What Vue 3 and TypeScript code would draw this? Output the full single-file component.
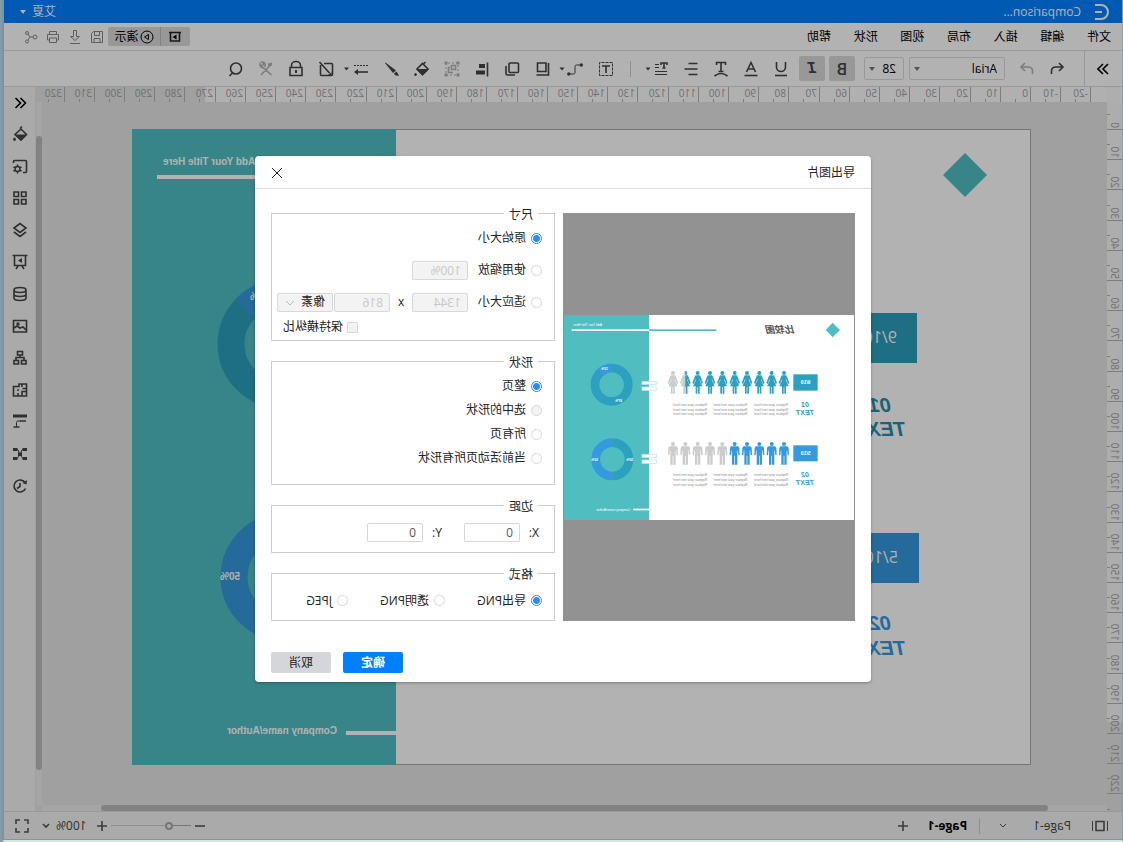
<script setup lang="ts">
import { ref } from 'vue'

type Shape = { d: string; f?: boolean; w?: number; c?: string; dash?: string }
type Icon = { label: string; w?: number; off?: boolean; shapes: Shape[] }

const menus = ['文件', '编辑', '插入', '布局', '视图', '形状', '帮助']

const textTools: Icon[] = [
  { label: '下划线', shapes: [{ d: 'M10.5 5v5a4.5 4.5 0 0 0 9 0V5', w: 2 }, { d: 'M9 18.5h12', w: 2 }] },
  { label: '字体颜色', shapes: [{ d: 'M10.5 15L15 5.5L19.5 15M12 12h6', w: 2 }, { d: 'M8.5 18.5h13', w: 2 }] },
  { label: '文字效果', shapes: [{ d: 'M10.5 8V5.5h9V8M15 5.5v9M12.5 14.5h5', w: 2 }, { d: 'M8.5 19q6.500-5 13 0', w: 2 }] },
  { label: '行距', shapes: [{ d: 'M8.5 6.500h9M8.500 12h13M8.500 17.500h9', w: 2 }] },
  { label: '段落', shapes: [{ d: 'M9 8V6h6v2M12 6v5M10.500 11h3', w: 2 }, { d: 'M17 7.500h4M17 10.500h4M9 14.500h12M9 17.500h12', w: 1 }, { d: 'M25.500 10.500h5l-2.500 3z', f: true }] }
]

const shapeTools: Icon[] = [
  { label: '文本框', shapes: [{ d: 'M8.5 5.5h13v13h-13z', dash: '3 1', w: 1 }, { d: 'M11 9h8M15 9v7', w: 2 }] },
  { label: '连接线', w: 34, shapes: [{ d: 'M10 8h4.500q1.500 0 1.500 1.500v6q0 1.500 1.500 1.500H22', w: 1 }, { d: 'M8 8a1.700 1.700 0 1 0 3.400 0a1.700 1.700 0 1 0-3.400 0M20.500 17a1.700 1.700 0 1 0 3.400 0a1.700 1.700 0 1 0-3.400 0M26.500 10.500h5l-2.500 3z', f: true }] },
  { label: '阴影', shapes: [{ d: 'M11 6h8.500v8.500H11z', w: 2 }, { d: 'M8.500 6v12h12', w: 2 }] },
  { label: '层叠', shapes: [{ d: 'M9.500 6h7.500q1 0 1 1v7.500q0 1-1 1H9.500q-1 0-1-1V7q0-1 1-1z', w: 2 }, { d: 'M21 9v7.500q0 1.500-1.500 1.500H12', w: 2 }] },
  { label: '对齐', shapes: [{ d: 'M9.500 5.500v14', w: 2 }, { d: 'M12 7h6v4h-6zM12 13.500h9v4h-9z', f: true }] },
  { label: '组合', off: true, shapes: [{ d: 'M9 6h12v12H9z', dash: '2 2', w: 1 }, { d: 'M7.500 4.500h3v3h-3zM19.500 4.500h3v3h-3zM7.500 16.500h3v3h-3zM19.500 16.500h3v3h-3z', f: true }, { d: 'M11.500 8.500h4v4h-4zM14 15.500h4.500v-5H17', w: 2 }] },
  { label: '填充', shapes: [{ d: 'M9 12L14.500 6.500L20 12L14.500 17.500z', w: 2 }, { d: 'M8 12h13l-6.500 6.500zM20 17.500q1.500-3 3 0q-1.500 3-3 0z', f: true }, { d: 'M11.500 5l2.500 2.500', w: 2 }] },
  { label: '画笔', shapes: [{ d: 'M21.500 5.500l.5.500-8 10-3-2.500zM10.500 14.500l2.500 2q-1 3-5 2z', f: true }] },
  { label: '线型', w: 36, shapes: [{ d: 'M9 8.500h14', dash: '2 1', w: 1 }, { d: 'M9 15h12', w: 2 }, { d: 'M19 12l4 3-4 3zM28 10.500h5l-2.500 3z', f: true }] },
  { label: '编辑形状', shapes: [{ d: 'M17 6.500h-7.500q-1 0-1 1v10q0 1 1 1h10q1 0 1-1V8M21.500 5l-10 11', w: 2 }, { d: 'M9.500 15l4 3.500h-4z', f: true }] },
  { label: '锁定', shapes: [{ d: 'M10.500 10V8.500a4.500 4 0 0 1 9 0V10M9 10.500h12v8H9z', w: 2 }, { d: 'M14 13h2v3h-2z', f: true }] },
  { label: '工具', off: true, shapes: [{ d: 'M9.500 18l8-7M20 18L10.500 8M17 11q4 0 4-4l-2 2-2-2 2-2q-4 0-3 5', w: 2 }, { d: 'M9 5.500l4 1v3l-4-1z', f: true }] },
  { label: '查找', shapes: [{ d: 'M9.500 11.500a5.500 5.500 0 1 0 11 0a5.500 5.500 0 1 0-11 0M18.500 16l3 3', w: 2 }] }
]

const fileTools: Icon[] = [
  { label: '保存', shapes: [{ d: 'M5.500 6.500h9l2 2v9h-11zM8.500 6.500v4h5v-4M8 17.500v-4h6v4' }] },
  { label: '下载', shapes: [{ d: 'M9.500 5.500h3v6h3l-4.500 4-4.500-4h3zM6 18.500h10' }] },
  { label: '打印', shapes: [{ d: 'M7.500 9V6.500h7V9M7.500 15h-2V9.500h11V15h-2M7.500 13h7v4.500h-7z' }] },
  { label: '分享', shapes: [{ d: 'M5 12a2 2 0 1 0 4 0a2 2 0 1 0-4 0M13.500 8a1.500 1.500 0 1 0 3 0a1.500 1.500 0 1 0-3 0M13.500 16.500a1.500 1.500 0 1 0 3 0a1.500 1.500 0 1 0-3 0M9 12h3l2-3M12 12l2 3' }] }
]

const sideTools: Icon[] = [
  { label: '收起', shapes: [{ d: 'M14.500 7l-5 5 5 5M19.500 7l-5 5 5 5', w: 2, c: '#000' }] },
  { label: '填充样式', shapes: [{ d: 'M13 4.500l2 2M8.500 12.500L14 7l6 5.500-6 5.500z', w: 2 }, { d: 'M8 12.500h12.500L14 19zM19 17q1.500-3 3 0q0 2-1.500 2t-1.500-2z', f: true }] },
  { label: '页面设置', shapes: [{ d: 'M12 18.500H9.500q-1 0-1-1v-10q0-1 1-1h11q1 0 1 1V9', w: 2 }, { d: 'M15 15a2.500 2.500 0 1 0 5 0a2.500 2.500 0 1 0-5 0M17.500 10.500v2M17.500 17.500v2M13.500 13l2 1M19.500 16l2 1M13.500 17l2-1M19.500 14l2-1', w: 2 }] },
  { label: '图形库', shapes: [{ d: 'M9 6h4.500v4.500H9zM16.500 6H21v4.500h-4.500zM9 13.500h4.500V18H9zM16.500 13.500H21V18h-4.500z', w: 2 }] },
  { label: '图层', shapes: [{ d: 'M15 5.500l6 4.500-6 4.500L9 10z M9 14l6 4.500 6-4.500', w: 2 }] },
  { label: '幻灯片', shapes: [{ d: 'M7.500 5.500h15M9.500 5.500v10h11v-10M13 16l-2 3M17 16l2 3', w: 2 }, { d: 'M13 8l4 2.500-4 2.500z', f: true }] },
  { label: '数据', shapes: [{ d: 'M9 8a6 2.500 0 1 0 12 0a6 2.500 0 1 0-12 0v8a6 2.500 0 0 0 12 0V8M9 12a6 2.500 0 0 0 12 0', w: 2 }] },
  { label: '图片', shapes: [{ d: 'M8.500 6.500h13v11.500h-13zM9 16l3-3 3 1 3-2 3 2', w: 2 }, { d: 'M15.500 8.500h3v3h-3z', f: true }] },
  { label: '组织结构', shapes: [{ d: 'M12.500 5.500h5v3.500h-5zM9 14.500h4.500V18H9zM16.500 14.500H21V18h-4.500zM15 9v2.500M11 14v-2.500h8V14', w: 2 }] },
  { label: '平面图', shapes: [{ d: 'M8.500 6h7.500v2.500h5.500v9.500h-13zM13 6v3M8.500 10.500h4M13 18v-4.500H9M17 18v-3M16 12h2', w: 2 }] },
  { label: '甘特图', shapes: [{ d: 'M8 6h14', w: 3 }, { d: 'M9 11h6M15.500 17h6', w: 2 }, { d: 'M14 11h3q1.500 0 1.500 1.500V17', w: 1 }] },
  { label: '思维导图', shapes: [{ d: 'M8 6h4.500v3H8zM17.500 6H22v3h-4.500zM8 15h4.500v3H8zM17.500 15H22v3h-4.500zM13 10.500h4v3.500h-4z', f: true }, { d: 'M12 7.500q2 0 2 4t-2 5M18 7.500q-2 0-2 4t2 5', w: 1 }] },
  { label: '历史记录', shapes: [{ d: 'M9.800 9A6 6 0 1 1 9.500 14.500', w: 2 }, { d: 'M15 9v3.500l3 2', w: 2 }, { d: 'M8 6l.5 4.500 4-1.500z', f: true }] }
]

const pitch = 3.02
const hTicks = Array.from({ length: 35 }, (_, i) => (i - 2) * 10).map(v => ({ v, p: Math.round(77 + v * pitch), h: Math.round(77 + (v + 5) * pitch) }))
const vTicks = Array.from({ length: 24 }, (_, i) => (i - 1) * 10).map(v => ({ v, p: Math.round(27 + v * pitch), h: Math.round(27 + (v + 5) * pitch) }))

const size = ref('original')
const scope = ref('page')
const format = ref('png')
const keepRatio = ref(false)
const zoomLevel = ref(25)

const scopes = [
  { id: 'page', text: '整页', off: false },
  { id: 'selected', text: '选中的形状', off: true },
  { id: 'all', text: '所有页', off: false },
  { id: 'active', text: '当前活动页所有形状', off: false }
]
const formats = [
  { id: 'png', text: '导出PNG' },
  { id: 'clear', text: '透明PNG' },
  { id: 'jpeg', text: 'JPEG' }
]

const woman = 'M-6 13H6Q8 14 9 17L16 36l-4 3L6 25l-1 1 9 20H6v22H1V48h-2v20h-5V46h-8l9-20-1-1-6 14-4-3 7-19q1-3 3-4z'
const man = 'M-9 13H9q4 0 5 5l1 21-4 1L9 22 8 30v38H1V41h-2v27h-7V30l-1-8-2 18-4-1 1-21q1-5 5-5z'
const people = Array.from({ length: 10 }, (_, i) => 210 + i * 37)
const columns = [198, 320, 441]
const lines = [0, 15, 29]
</script>

<template>
  <div class="desk">
    <div class="window">
      <header class="title">
        <svg class="logo" width="16" height="18" viewBox="0 0 16 18"><path d="M15 2H9a7 7 0 0 0 0 14h6M8 9h7" /></svg>
        <span class="name">Comparison...</span>
        <button class="user">艾夏<svg width="6" height="4"><path d="M0 0h6L3 4z" fill="currentColor" /></svg></button>
      </header>

      <div class="menubar">
        <nav><button v-for="m in menus" :key="m">{{ m }}</button></nav>
        <div class="file">
          <div class="present">
            <button aria-label="放映"><svg width="14" height="14"><path class="bold" d="M1 2.500h12M2.500 2.500v8.500h9V2.500" /><path d="M5.500 4.500l4 2.500-4 2.500z" /></svg></button>
            <button class="play"><svg width="14" height="14"><circle class="line" cx="7" cy="7" r="6" /><path class="line" d="M5.500 4.500v5l4-2.500z" /></svg>演示</button>
          </div>
          <button v-for="i in fileTools" :key="i.label" class="tool soft" :aria-label="i.label">
            <svg width="22" height="24"><path v-for="(s, k) in i.shapes" :key="k" class="line" :d="s.d" /></svg>
          </button>
        </div>
      </div>

      <div class="toolbar">
        <button class="expand" aria-label="展开"><svg width="12" height="12"><path class="bold" d="M1 1l5 5-5 5M6 1l5 5-5 5" /></svg></button>
        <div class="history">
          <button class="tool" aria-label="撤销"><svg width="30" height="24"><path class="bold" d="M13 6l-4 4 4 4M9 10h7q4.500 0 4.500 4v3" /></svg></button>
          <button class="tool off" aria-label="重做"><svg width="30" height="24"><path class="bold" d="M17 6l4 4-4 4M21 10h-7q-4.500 0-4.500 4v3" /></svg></button>
        </div>
        <span class="drop family">
          <select aria-label="字体"><option>Arial</option></select>
          <svg width="6" height="4"><path d="M0 0h6L3 4z" /></svg>
        </span>
        <span class="drop pts">
          <select aria-label="字号"><option>28</option></select>
          <svg width="6" height="4"><path d="M0 0h6L3 4z" /></svg>
        </span>
        <button class="toggle">B</button>
        <button class="toggle slant">I</button>
        <div class="group">
          <button v-for="i in textTools" :key="i.label" class="tool" :aria-label="i.label">
            <svg width="30" height="24"><path v-for="(s, k) in i.shapes" :key="k" :d="s.d" :class="s.f ? 'solid' : s.w === 2 ? 'bold' : 'line'" /></svg>
          </button>
        </div>
        <span class="bar"></span>
        <div class="group">
          <button v-for="i in shapeTools" :key="i.label" class="tool" :class="{ off: i.off }" :aria-label="i.label">
            <svg :width="i.w ?? 30" height="24"><path v-for="(s, k) in i.shapes" :key="k" :d="s.d" :stroke-dasharray="s.dash" :class="s.f ? 'solid' : s.w === 2 ? 'bold' : 'line'" /></svg>
          </button>
        </div>
      </div>

      <div class="work">
        <main>
          <div class="corner"></div>
          <div class="hruler">
            <svg width="100%" height="15">
              <g v-for="t in hTicks" :key="t.v">
                <rect :x="t.p - 1" y="0" width="1" height="15" />
                <rect :x="t.h - 1" y="12" width="1" height="3" />
                <text :x="t.p + 2" y="10">{{ t.v }}</text>
              </g>
            </svg>
          </div>
          <div class="vruler">
            <svg width="15" height="100%">
              <g v-for="t in vTicks" :key="t.v">
                <rect x="0" :y="t.p" width="15" height="1" />
                <rect x="12" :y="t.h" width="3" height="1" />
                <text v-if="t.v >= 0" :transform="`translate(11 ${t.p - 1}) rotate(-90)`">{{ t.v }}</text>
              </g>
            </svg>
          </div>
          <div class="canvas">
            <svg class="page" width="899" height="636" viewBox="-1 0 899 636">
              <rect x="-.5" y=".5" width="898" height="635" fill="#fff" stroke="#aaa" />
              <rect x="634" y="0" width="264" height="636" fill="#50bfc3" />
              <path d="M65 24L87 46L65 68L43 46z" fill="#50bfc3" />
              <rect x="113" y="184" width="114" height="50" fill="#2ca0be" />
              <rect x="111" y="404" width="114" height="50" fill="#3499dd" />
              <g class="score"><text x="133" y="214">9/10</text><text x="132" y="434">5/10</text></g>
              <g class="heading" fill="#278da9"><text x="139" y="283">01</text><text x="124" y="307">TEXT</text></g>
              <g class="heading" fill="#3499dd"><text x="139" y="501">02</text><text x="124" y="526">TEXT</text></g>
              <rect x="600" y="46" width="273" height="4" fill="#fff" />
              <rect x="634" y="602" width="50" height="4" fill="#fff" />
              <g class="caption"><text x="867" y="36" text-anchor="end">Add Your Title Here</text><text x="693" y="605">Company name/Author</text></g>
              <circle cx="748" cy="215" r="51" fill="none" stroke="#2ca0be" stroke-width="27" />
              <path d="M748 164A51 51 0 0 1 785 180" fill="none" stroke="#3499dd" stroke-width="27" />
              <circle cx="745" cy="448" r="51" fill="none" stroke="#3499dd" stroke-width="27" />
              <g class="share"><text x="780" y="171" text-anchor="end">13%</text><text x="790" y="451">50%</text></g>
            </svg>
          </div>
          <div class="vscroll"><i></i></div>
          <div class="hscroll"><i></i></div>
          <div class="join"></div>
        </main>
        <aside>
          <button v-for="i in sideTools" :key="i.label" class="tool" :aria-label="i.label">
            <svg width="30" height="24"><path v-for="(s, k) in i.shapes" :key="k" :d="s.d" :class="s.f ? 'solid' : s.w === 3 ? 'thick' : s.w === 2 ? 'bold' : 'line'" :style="s.c ? { stroke: s.c } : undefined" /></svg>
          </button>
        </aside>
      </div>

      <footer>
        <button class="tool book" aria-label="页面"><svg width="18" height="12"><path class="bold" d="M5 1.500h8v9H5z" /><path class="line" d="M1.500 1v10M16.500 1v10" /></svg></button>
        <button class="pager">Page-1<svg width="8" height="6"><path class="line" d="M1 1l3 3 3-3" /></svg></button>
        <span class="bar"></span>
        <button class="tab">Page-1</button>
        <button class="tool add" aria-label="新建页"><svg width="10" height="10"><path class="bold" d="M0 5h10M5 0v10" /></svg></button>
        <span class="space"></span>
        <button class="tool" aria-label="缩小"><svg width="10" height="10"><path class="bold" d="M0 5h10" /></svg></button>
        <input v-model="zoomLevel" type="range" min="0" max="100" aria-label="缩放">
        <button class="tool" aria-label="放大"><svg width="10" height="10"><path class="bold" d="M0 5h10M5 0v10" /></svg></button>
        <button class="percent">100%<svg width="8" height="6"><path class="bold" d="M1 1l3 3 3-3" /></svg></button>
        <button class="tool" aria-label="全屏"><svg width="14" height="14"><path class="bold" d="M1 5V1h4M9 1h4v4M13 9v4H9M5 13H1V9" /></svg></button>
      </footer>

      <div class="mask">
        <section class="dialog" role="dialog" aria-labelledby="dialog-title">
          <div class="head">
            <h2 id="dialog-title">导出图片</h2>
            <button aria-label="关闭"><svg width="10" height="10"><path class="line" d="M0 0l10 10M10 0L0 10" /></svg></button>
          </div>
          <div class="body">
            <div class="preview">
              <svg width="290" height="205" viewBox="0 0 870 615">
                <defs><clipPath id="half"><rect x="-20" y="-2" width="20" height="72" /></clipPath></defs>
                <rect width="870" height="615" fill="#fff" />
                <rect x="615" width="255" height="615" fill="#50bdc1" />
                <path d="M64 23L85 45L64 67L42 45z" fill="#50bdc1" />
                <text x="177" y="53" class="p-title">比较图</text>
                <rect x="413" y="43" width="202" height="5" fill="#50bdc1" />
                <rect x="615" y="43" width="232" height="5" fill="#fff" />
                <text x="842" y="34" class="p-cap" text-anchor="end">Add Your Title Here</text>
                <rect x="109" y="178" width="73" height="49" fill="#2ca0be" />
                <rect x="109" y="391" width="73" height="48" fill="#3499dd" />
                <text x="145" y="208" class="p-score">9/10</text>
                <text x="145" y="420" class="p-score">5/10</text>
                <g class="p-head" fill="#2c97b5"><text x="147" y="275">01</text><text x="147" y="299">TEXT</text></g>
                <g class="p-head" fill="#3499dd"><text x="147" y="487">02</text><text x="147" y="511">TEXT</text></g>
                <g v-for="(x, i) in people" :key="x">
                  <g :transform="`translate(${x} 168)`" :fill="i < 8 ? '#2ca0be' : '#ccc'">
                    <circle cx="0" cy="6" r="6" /><path :d="woman" />
                    <g v-if="i === 8" clip-path="url(#half)" fill="#2ca0be"><circle cx="0" cy="6" r="6" /><path :d="woman" /></g>
                  </g>
                  <g :transform="`translate(${x} 381)`" :fill="i < 5 ? '#3499dd' : '#ccc'"><circle cx="0" cy="6" r="6" /><path :d="man" /></g>
                </g>
                <g class="p-copy">
                  <template v-for="x in columns" :key="x">
                    <text v-for="y in lines" :key="y" :x="x" :y="272 + y">Replace your text here!</text>
                    <text v-for="y in lines" :key="y + 100" :x="x" :y="484 + y">Replace your text here!</text>
                  </template>
                </g>
                <g fill="#fff" stroke="#b9e5e6" stroke-width="2">
                  <rect x="592" y="199" width="44" height="9" /><rect x="592" y="216" width="44" height="10" />
                  <rect x="592" y="418" width="44" height="10" /><rect x="592" y="435" width="44" height="10" />
                </g>
                <g fill="none" stroke-width="26">
                  <circle cx="727" cy="209" r="50" stroke="#2ca0be" />
                  <path d="M727 159A50 50 0 0 1 763 175" stroke="#3499dd" />
                  <path d="M725 383A50 50 0 0 0 725 483" stroke="#2ca0be" />
                  <path d="M725 383A50 50 0 0 1 725 483" stroke="#3499dd" />
                </g>
                <g class="p-share"><text x="748" y="165">13%</text><text x="706" y="260">87%</text><text x="673" y="437">50%</text><text x="778" y="437">50%</text></g>
                <rect x="615" y="581" width="48" height="5" fill="#fff" />
                <text x="671" y="587" class="p-cap">Company name/Author</text>
              </svg>
            </div>

            <form @submit.prevent>
              <fieldset class="size">
                <legend>尺寸</legend>
                <div class="row"><label><input v-model="size" type="radio" name="size" value="original">原始大小</label></div>
                <div class="row"><label><input v-model="size" type="radio" name="size" value="scale">使用缩放</label><input class="field" disabled value="100%" aria-label="缩放比例"></div>
                <div class="row">
                  <label><input v-model="size" type="radio" name="size" value="fit">适应大小</label>
                  <input class="field" disabled value="1344" aria-label="宽度"><span class="times">x</span><input class="field" disabled value="816" aria-label="高度">
                  <span class="drop unit"><select disabled aria-label="单位"><option>像素</option></select><svg width="8" height="6"><path class="line" d="M0 1l4 4 4-4" /></svg></span>
                </div>
                <div class="row keep"><label><input v-model="keepRatio" type="checkbox" disabled>保持横纵比</label></div>
              </fieldset>
              <fieldset class="scope">
                <legend>形状</legend>
                <label v-for="s in scopes" :key="s.id"><input v-model="scope" type="radio" name="scope" :value="s.id" :disabled="s.off">{{ s.text }}</label>
              </fieldset>
              <fieldset class="short">
                <legend>边距</legend>
                <div class="margins">
                  <label for="mx">X:</label><input id="mx" class="field" value="0">
                  <label for="my">Y:</label><input id="my" class="field" value="0">
                </div>
              </fieldset>
              <fieldset class="short">
                <legend>格式</legend>
                <div class="formats"><label v-for="f in formats" :key="f.id"><input v-model="format" type="radio" name="format" :value="f.id">{{ f.text }}</label></div>
              </fieldset>
            </form>
          </div>
          <div class="actions"><button class="ok">确定</button><button class="cancel">取消</button></div>
        </section>
      </div>
    </div>
  </div>
</template>

<style>
body { overflow: hidden; }
</style>

<style scoped>
* { box-sizing: border-box; }
.desk {
  height: 100vh;
  display: flex;
  border-right: 2px solid #849ba6;
  transform: scaleX(-1);
  font: 12px/16px "Open Sans", "Noto Sans CJK SC", sans-serif;
  color: #000;
}
button, select, input { font: inherit; color: inherit; }
button { margin: 0; padding: 0; border: 0; background: none; white-space: nowrap; }
svg { display: block; flex: none; }
.line, .bold, .thick { fill: none; stroke: currentColor; stroke-width: 1px; }
.bold { stroke-width: 1.6px; }
.thick { stroke-width: 3px; }
.solid { fill: currentColor; }

.window {
  position: relative;
  flex: 1;
  min-width: 0;
  display: flex;
  flex-direction: column;
  border-left: 1px solid #84a09e;
  border-right: 2px solid #7d939d;
  border-bottom: 2px solid #cdebe6;
  background: #fff;
}
.title { flex: none; height: 23px; display: flex; align-items: center; padding: 0 16px 0 12px; background: #0080ff; color: #fff; }
.logo path { fill: none; stroke: #fff; stroke-width: 2px; }
.name { margin-left: 13px; }
.user { margin-left: auto; display: flex; align-items: center; gap: 6px; color: #fff; }

.menubar { flex: none; height: 28px; display: flex; align-items: center; justify-content: space-between; padding: 0 16px 0 11px; border-bottom: 1px solid #dcdcdc; }
nav { width: 304px; display: flex; justify-content: space-between; }
.file, .present, .group, .history { display: flex; align-items: center; }
.present { height: 19px; border-radius: 2px; background: #dadada; overflow: hidden; color: #222; }
.present button { width: 29px; height: 19px; display: flex; align-items: center; justify-content: center; }
.present .play { width: 53px; gap: 1px; border-left: 1px solid #bbb; color: #000; }
.tool { display: flex; align-items: center; justify-content: center; color: #444; }
.tool.soft { color: #888; }
.tool.off { color: #b3b3b3; }

.toolbar { flex: none; height: 36px; display: flex; align-items: center; border-bottom: 1px solid #dcdcdc; }
.expand { width: 38px; height: 35px; padding-left: 13px; border-right: 1px solid #dcdcdc; }
.history { margin: 0 7px 0 12px; }
.drop { position: relative; display: flex; }
.drop select { width: 100%; appearance: none; border: 1px solid #dcdcdc; border-radius: 2px; background: none; opacity: 1; }
.drop svg { position: absolute; right: 5px; top: 10px; color: #777; fill: #777; pointer-events: none; }
.family { width: 96px; }
.pts { width: 40px; margin: 0 9px 0 5px; }
.family select, .pts select { height: 23px; padding: 0 7px; }
.toggle { width: 26px; height: 25px; margin-right: 4px; border-radius: 2px; background: #dadada; color: #444; font-size: 16px; font-weight: 600; }
.slant { margin-right: 3px; font-family: "Liberation Mono", monospace; font-style: italic; }
.bar { width: 1px; height: 16px; background: #ccc; }
.toolbar .bar { margin: 0 9px 0 15px; }

.work { flex: 1; min-height: 0; display: flex; padding-right: 1px; background: #f4f4f4; }
main { flex: 1; min-width: 0; display: grid; grid-template: 15px 1fr 6px / 15px 1fr 6px; background: #e5e5e5; }
.corner { background: #fafafa; }
.hruler { grid-column: 2 / 4; background: linear-gradient(90deg, #fcfcfc 902px, #e5e5e5 902px); }
.vruler { position: relative; grid-row: 2 / 4; grid-column: 1; min-height: 0; contain: size; overflow: hidden; background: linear-gradient(#f8f8f8 620px, #e5e5e5 620px); }
.vruler svg { height: 100%; overflow: hidden; }
.hruler rect, .vruler rect { fill: #b4b4b4; }
.hruler text, .vruler text { font-size: 10px; fill: #a0a0a0; }
.canvas { position: relative; grid-row: 2; grid-column: 2; min-height: 0; overflow: hidden; }
.page { position: absolute; left: 76px; top: 27px; }
.score { font-size: 16px; fill: #fff; }
.heading { font: italic 700 20px "Liberation Sans", sans-serif; }
.caption { font: 700 10px "Liberation Sans", sans-serif; fill: #fff; }
.share { font: 700 10px "Liberation Sans", sans-serif; fill: #fff; }
.vscroll { grid-row: 2; grid-column: 3; padding: 34px 0 35px; background: #ececec; }
.hscroll { grid-row: 3; grid-column: 2; padding: 0 59px; background: #ececec; }
.vscroll i, .hscroll i { display: block; height: 100%; border-radius: 3px; background: #bababa; }
.join { grid-row: 3; grid-column: 3; background: #e5e5e5; }
aside { flex: none; width: 31px; border-left: 1px solid #e5e5e5; background: #f4f4f4; }
aside .tool { height: 32px; width: 30px; }
aside .tool:first-child { height: 31px; }

footer { flex: none; height: 29px; display: flex; align-items: center; padding: 0 11px 0 13px; border-top: 1px solid #dcdcdc; border-bottom: 1px solid #c5d5d5; background: #f4f4f4; color: #444; }
footer svg { color: #555; }
.book { margin-right: 20px; }
.pager { display: flex; align-items: center; gap: 26px; margin-right: 19px; }
.tab { margin: 0 20px 0 12px; color: #000; font-weight: 700; }
.space { flex: 1; }
footer input { width: 80px; height: 12px; margin: 0 4px; appearance: none; background: linear-gradient(90deg, #aaa 20px, #ccc 20px) center / 100% 1px no-repeat; }
footer input::-webkit-slider-thumb { appearance: none; width: 8px; height: 8px; border: 2px solid #aaa; border-radius: 50%; background: #f4f4f4; }
.percent { display: flex; align-items: center; gap: 6px; margin: 0 13px 0 10px; }

.mask { position: absolute; inset: 0; display: flex; align-items: center; justify-content: center; padding-bottom: 2px; background: rgba(0, 0, 0, .3); }
.dialog { width: 616px; max-width: 100%; background: #fff; border-radius: 4px; box-shadow: 0 1px 3px rgba(0, 0, 0, .3); color: #222; }
.head { height: 33px; display: flex; align-items: center; justify-content: space-between; padding: 2px 17px 0 16px; border-bottom: 1px solid #ddd; }
h2 { margin: 0; font: inherit; }
.body { display: flex; gap: 8px; padding: 24px 16px 0; }
.preview { flex: 1; display: flex; align-items: center; justify-content: center; background: #929292; }
form { width: 284px; margin-top: -8px; }
fieldset { min-width: 0; margin: 0 0 12px; padding: 0 0 0 12px; border: 1px solid #ccc; }
fieldset:last-child { margin-bottom: 0; }
legend { height: 16px; padding: 0 5px; margin-left: 4px; line-height: 20px; }
.size { height: 136px; }
.scope { height: 132px; }
.short { height: 56px; }
.row { height: 32px; display: flex; align-items: center; }
.row.keep { height: 18px; padding-left: 184px; }
label { display: flex; align-items: center; }
.scope label { height: 24px; }
.size legend { margin-bottom: 1px; }
.scope legend { margin-bottom: 5px; }
input[type="radio"], input[type="checkbox"] { appearance: none; flex: none; width: 11px; height: 11px; margin: 0 5px 0 0; border: 1px solid #d5d7dc; background: #fff; }
input[type="radio"] { border-radius: 50%; }
input[type="checkbox"] { border-radius: 1px; margin-right: 4px; }
input[type="radio"]:checked { border-color: #2d8cf0; background: radial-gradient(#2d8cf0 3px, #fff 4px); }
input:disabled { background: #f3f3f3; }
.field { width: 56px; height: 19px; padding: 0 6px; border: 1px solid #d5d7dc; border-radius: 2px; background: #fff; color: #555; }
.field:disabled { color: #c8c8c8; }
.row .field { flex: none; }
.row label + .field { margin-left: 10px; }
.times { width: 22px; text-align: center; }
.unit { width: 56px; margin-left: 1px; }
.unit select { height: 19px; padding: 0 7px; border-color: #d5d7dc; background: #f3f3f3; color: #222; }
.unit svg { right: 9px; top: 7px; color: #bbb; fill: none; }
.margins { height: 39px; display: flex; align-items: center; padding-left: 3px; }
.margins .field { margin: 0 22px 0 8px; }
.margins label { min-width: 11px; }
.formats { height: 39px; display: grid; grid-template-columns: 97px 97px 1fr; align-items: center; }
.actions { display: flex; justify-content: flex-end; gap: 12px; padding: 31px 16px 9px; }
.actions button { width: 60px; height: 21px; border-radius: 2px; }
.ok { background: #0080ff; color: #fff; font-weight: 700; }
.cancel { background: #d5d6da; }

.p-title { font: italic 700 29px "Noto Sans CJK SC", sans-serif; fill: #555; }
.p-cap { font: 10px "Liberation Sans", sans-serif; fill: #fff; }
.p-score { font: 700 15px "Liberation Sans", sans-serif; fill: #fff; text-anchor: middle; }
.p-head { font: italic 700 21px "Liberation Sans", sans-serif; text-anchor: middle; }
.p-copy { font: 10px "Liberation Sans", sans-serif; fill: #888; }
.p-share { font: 700 10px "Liberation Sans", sans-serif; fill: #fff; text-anchor: middle; }
</style>
